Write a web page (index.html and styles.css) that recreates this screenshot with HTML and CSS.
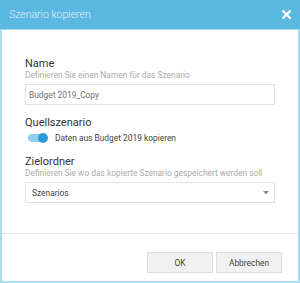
FILE: index.html
```html
<!DOCTYPE html>
<html lang="de">
<head>
<meta charset="utf-8">
<link rel="stylesheet" href="styles.css">
</head>
<body>
<div class="dialog">
  <div class="header">
    <span class="title">Szenario kopieren</span>
    <svg class="close" width="9" height="9" viewBox="0 0 9 9"><path d="M1.2 1.2 L7.8 7.8 M7.8 1.2 L1.2 7.8" stroke="#fff" stroke-width="2.2" stroke-linecap="square"/></svg>
  </div>
  <div class="body">
    <div class="content">
      <div class="label">Name</div>
      <div class="hint">Definieren Sie einen Namen für das Szenario</div>
      <div class="field">Budget 2019_Copy</div>
      <div class="label gap">Quellszenario</div>
      <div class="toggle-row">
        <span class="toggle"><span class="knob"></span></span>
        <span class="toggle-text">Daten aus Budget 2019 kopieren</span>
      </div>
      <div class="label gap2">Zielordner</div>
      <div class="hint">Definieren Sie wo das kopierte Szenario gespeichert werden soll</div>
      <div class="field select">
        <span>Szenarios</span>
        <svg width="6" height="4" viewBox="0 0 6 4"><path d="M0 0 H6 L3 3.5 Z" fill="#8a8a8a"/></svg>
      </div>
    </div>
    <div class="footer">
      <button class="btn">OK</button>
      <button class="btn">Abbrechen</button>
    </div>
  </div>
</div>
</body>
</html>
```
FILE: styles.css
```css
html, body {
  margin: 0;
  padding: 0;
  background: #fff;
}
body {
  width: 300px;
  height: 283px;
  font-family: Roboto, "Liberation Sans", sans-serif;
}
.dialog {
  width: 300px;
  height: 283px;
  display: flex;
  flex-direction: column;
}
.header {
  height: 29px;
  flex: none;
  background: #5bb8e1;
  display: flex;
  align-items: center;
  justify-content: space-between;
  padding: 0 9px 0 9px;
}
.title {
  color: #e2f2fb;
  font-size: 10.5px;
  font-weight: 300;
}
.close {
  display: block;
}
.body {
  flex: 1;
  min-height: 0;
  display: flex;
  flex-direction: column;
  border: 2px solid #a9dcf2;
  border-top: 1px solid #a9dcf2;
}
.content {
  flex: 1;
  min-height: 0;
  padding: 27px 23px 0 23px;
}
.label {
  font-size: 11px;
  line-height: 13px;
  color: #333;
}
.gap { margin-top: 11px; }
.gap2 { margin-top: 8px; }
.hint {
  font-size: 8.4px;
  line-height: 11px;
  color: #aaa;
}
.field {
  margin-top: 3px;
  height: 21px;
  box-sizing: border-box;
  border: 1px solid #e2e2e2;
  padding: 0 3px;
  display: flex;
  align-items: center;
  font-size: 8.4px;
  color: #707070;
}
.select {
  justify-content: space-between;
  padding: 0 5px 0 6px;
  color: #444;
}
.toggle-row {
  height: 18px;
  display: flex;
  align-items: center;
}
.toggle {
  position: relative;
  width: 18px;
  height: 8px;
  border-radius: 4px;
  background: #8fcdee;
  margin-left: 3px;
}
.knob {
  position: absolute;
  right: -2px;
  top: -1px;
  width: 10px;
  height: 10px;
  border-radius: 50%;
  background: #2b9cd8;
}
.toggle-text {
  margin-left: 9px;
  font-size: 8.4px;
  color: #444;
}
.footer {
  flex: none;
  height: 48px;
  box-sizing: border-box;
  border-top: 1px solid #e6e6e6;
  display: flex;
  justify-content: flex-end;
  align-items: flex-start;
  gap: 3px;
  padding: 18px 16px 0 0;
}
.btn {
  width: 66px;
  height: 21px;
  margin: 0;
  border: 1px solid #dcdcdc;
  background: #f1f1f1;
  color: #444;
  font-family: Roboto, "Liberation Sans", sans-serif;
  font-size: 8.4px;
  padding: 0;
}
```
